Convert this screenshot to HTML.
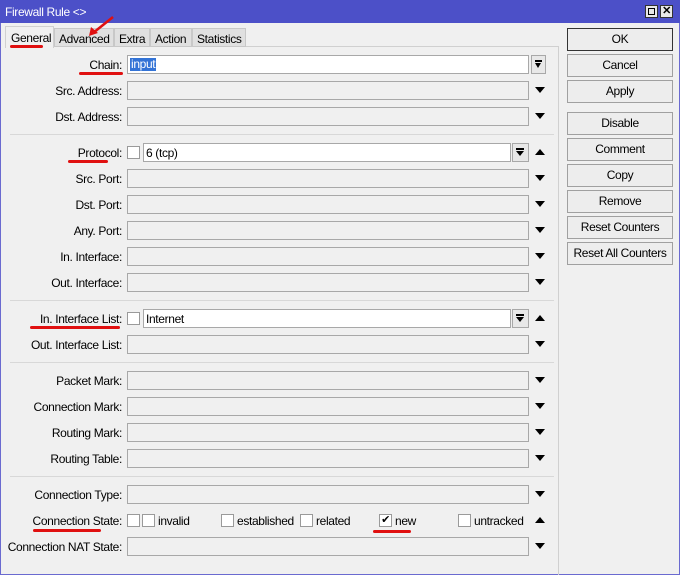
<!DOCTYPE html><html><head><style>
*{margin:0;padding:0;box-sizing:border-box}
body{width:683px;height:575px;overflow:hidden;background:#fff;font-family:"Liberation Sans",sans-serif;font-size:12px;letter-spacing:-0.35px;color:#000;position:relative}
.a{position:absolute}
.lbl{position:absolute;right:561px;text-align:right;white-space:nowrap}
.f{position:absolute;left:127px;width:402px;height:19px;border:1px solid #a8a8a8;background:#f0f0f0}
.dn{position:absolute;left:535px;width:0;height:0;border-left:5px solid transparent;border-right:5px solid transparent;border-top:6px solid #000}
.up{position:absolute;left:535px;width:0;height:0;border-left:5px solid transparent;border-right:5px solid transparent;border-bottom:6px solid #000}
.sep{position:absolute;left:10px;width:544px;height:1px;background:#d8d8d8}
.btn{position:absolute;left:567px;width:106px;height:23px;border:1px solid #a0a0a0;background:#ededed;text-align:center;line-height:21px}
.cb{position:absolute;width:13px;height:13px;border:1px solid #9a9a9a;background:#fff}
.red{position:absolute;height:3px;background:#e01010;border-radius:2px}
.dd{position:absolute;left:512px;width:17px;height:19px;border:1px solid #a8a8a8;background:#e8e8e8}
.tab{position:absolute;top:28px;height:19px;background:#e0e0e0;border:1px solid #c8c8c8;padding:3px 0 0 4px}
</style></head><body>
<div class="a" style="left:0;top:0;width:680px;height:575px;background:#f0f0f0;border:1px solid #6a6ad0"></div>
<div class="a" style="left:0;top:0;width:680px;height:23px;background:#4c50c8"></div>
<div class="a" style="left:5px;top:5px;color:#fff">Firewall Rule &lt;&gt;</div>
<div class="a" style="left:645px;top:5px;width:13px;height:13px;background:#e8e8e8;border:1px solid #333"><div class="a" style="left:2px;top:2px;width:7px;height:7px;border:1px solid #000"></div></div>
<div class="a" style="left:660px;top:5px;width:13px;height:13px;background:#e8e8e8;border:1px solid #333;font-size:11px;font-weight:bold;line-height:11px;text-align:center">✕</div>
<div class="a" style="left:680px;top:0;width:3px;height:575px;background:#fff"></div>
<div class="a" style="left:5px;top:46px;width:554px;height:529px;border-top:1px solid #d0d0d0;border-right:1px solid #d0d0d0"></div>
<div class="a" style="left:5px;top:26px;width:49px;height:22px;background:#f0f0f0;border:1px solid #d0d0d0;border-bottom:none;padding:4px 0 0 5px">General</div>
<div class="tab" style="left:54px;width:60px">Advanced</div>
<div class="tab" style="left:114px;width:36px">Extra</div>
<div class="tab" style="left:150px;width:42px">Action</div>
<div class="tab" style="left:192px;width:54px">Statistics</div>
<div class="red" style="left:10px;top:45px;width:33px"></div>
<svg class="a" style="left:85px;top:15px" width="30" height="22"><path d="M28 2 L8 18" stroke="#e01010" stroke-width="2.5"/><path d="M4 21 L6 12 L13 18 Z" fill="#e01010"/></svg>
<div class="a" style="left:558px;top:46px;width:1px;height:529px;background:#d0d0d0"></div>
<div class="lbl" style="top:58px">Chain:</div>
<div class="f" style="top:55px;background:#fff"><span class="a" style="left:2px;top:2px;background:#3373d6;color:#fff;padding:0 1px;line-height:13px">input</span></div>
<div class="dd" style="left:531px;top:55px;width:15px"><div class="a" style="left:3px;top:4px;width:7px;height:2px;background:#000"></div><div class="a" style="left:3px;top:7px;border-left:3.5px solid transparent;border-right:3.5px solid transparent;border-top:5px solid #000"></div></div>
<div class="red" style="left:79px;top:72px;width:44px"></div>
<div class="lbl" style="top:84px">Src. Address:</div><div class="f" style="top:81px"></div><div class="dn" style="top:87px"></div>
<div class="lbl" style="top:110px">Dst. Address:</div><div class="f" style="top:107px"></div><div class="dn" style="top:113px"></div>
<div class="sep" style="top:134px"></div>
<div class="lbl" style="top:146px">Protocol:</div>
<div class="cb" style="left:127px;top:146px"></div>
<div class="f" style="left:143px;width:368px;top:143px;background:#fff;padding:2px 0 0 2px">6 (tcp)</div>
<div class="dd" style="top:143px"><div class="a" style="left:3px;top:4px;width:8px;height:2px;background:#000"></div><div class="a" style="left:3px;top:7px;border-left:4px solid transparent;border-right:4px solid transparent;border-top:5px solid #000"></div></div>
<div class="up" style="top:149px"></div>
<div class="red" style="left:68px;top:160px;width:40px"></div>
<div class="lbl" style="top:172px">Src. Port:</div><div class="f" style="top:169px"></div><div class="dn" style="top:175px"></div>
<div class="lbl" style="top:198px">Dst. Port:</div><div class="f" style="top:195px"></div><div class="dn" style="top:201px"></div>
<div class="lbl" style="top:224px">Any. Port:</div><div class="f" style="top:221px"></div><div class="dn" style="top:227px"></div>
<div class="lbl" style="top:250px">In. Interface:</div><div class="f" style="top:247px"></div><div class="dn" style="top:253px"></div>
<div class="lbl" style="top:276px">Out. Interface:</div><div class="f" style="top:273px"></div><div class="dn" style="top:279px"></div>
<div class="sep" style="top:300px"></div>
<div class="lbl" style="top:312px">In. Interface List:</div>
<div class="cb" style="left:127px;top:312px"></div>
<div class="f" style="left:143px;width:368px;top:309px;background:#fff;padding:2px 0 0 2px">Internet</div>
<div class="dd" style="top:309px"><div class="a" style="left:3px;top:4px;width:8px;height:2px;background:#000"></div><div class="a" style="left:3px;top:7px;border-left:4px solid transparent;border-right:4px solid transparent;border-top:5px solid #000"></div></div>
<div class="up" style="top:315px"></div>
<div class="red" style="left:30px;top:326px;width:90px"></div>
<div class="lbl" style="top:338px">Out. Interface List:</div><div class="f" style="top:335px"></div><div class="dn" style="top:341px"></div>
<div class="sep" style="top:362px"></div>
<div class="lbl" style="top:374px">Packet Mark:</div><div class="f" style="top:371px"></div><div class="dn" style="top:377px"></div>
<div class="lbl" style="top:400px">Connection Mark:</div><div class="f" style="top:397px"></div><div class="dn" style="top:403px"></div>
<div class="lbl" style="top:426px">Routing Mark:</div><div class="f" style="top:423px"></div><div class="dn" style="top:429px"></div>
<div class="lbl" style="top:452px">Routing Table:</div><div class="f" style="top:449px"></div><div class="dn" style="top:455px"></div>
<div class="sep" style="top:476px"></div>
<div class="lbl" style="top:488px">Connection Type:</div><div class="f" style="top:485px"></div><div class="dn" style="top:491px"></div>
<div class="lbl" style="top:514px">Connection State:</div>
<div class="cb" style="left:127px;top:514px"></div>
<div class="cb" style="left:142px;top:514px"></div><div class="a" style="left:158px;top:514px">invalid</div>
<div class="cb" style="left:221px;top:514px"></div><div class="a" style="left:237px;top:514px">established</div>
<div class="cb" style="left:300px;top:514px"></div><div class="a" style="left:316px;top:514px">related</div>
<div class="cb" style="left:379px;top:514px;font-size:11px;line-height:11px;text-align:center">✔</div><div class="a" style="left:395px;top:514px">new</div>
<div class="cb" style="left:458px;top:514px"></div><div class="a" style="left:474px;top:514px">untracked</div>
<div class="up" style="top:517px"></div>
<div class="red" style="left:33px;top:529px;width:68px"></div>
<div class="red" style="left:373px;top:530px;width:38px"></div>
<div class="lbl" style="top:540px">Connection NAT State:</div><div class="f" style="top:537px"></div><div class="dn" style="top:543px"></div>
<div class="btn" style="top:28px;border:1px solid #333">OK</div>
<div class="btn" style="top:54px">Cancel</div>
<div class="btn" style="top:80px">Apply</div>
<div class="btn" style="top:112px">Disable</div>
<div class="btn" style="top:138px">Comment</div>
<div class="btn" style="top:164px">Copy</div>
<div class="btn" style="top:190px">Remove</div>
<div class="btn" style="top:216px">Reset Counters</div>
<div class="btn" style="top:242px">Reset All Counters</div>
</body></html>
